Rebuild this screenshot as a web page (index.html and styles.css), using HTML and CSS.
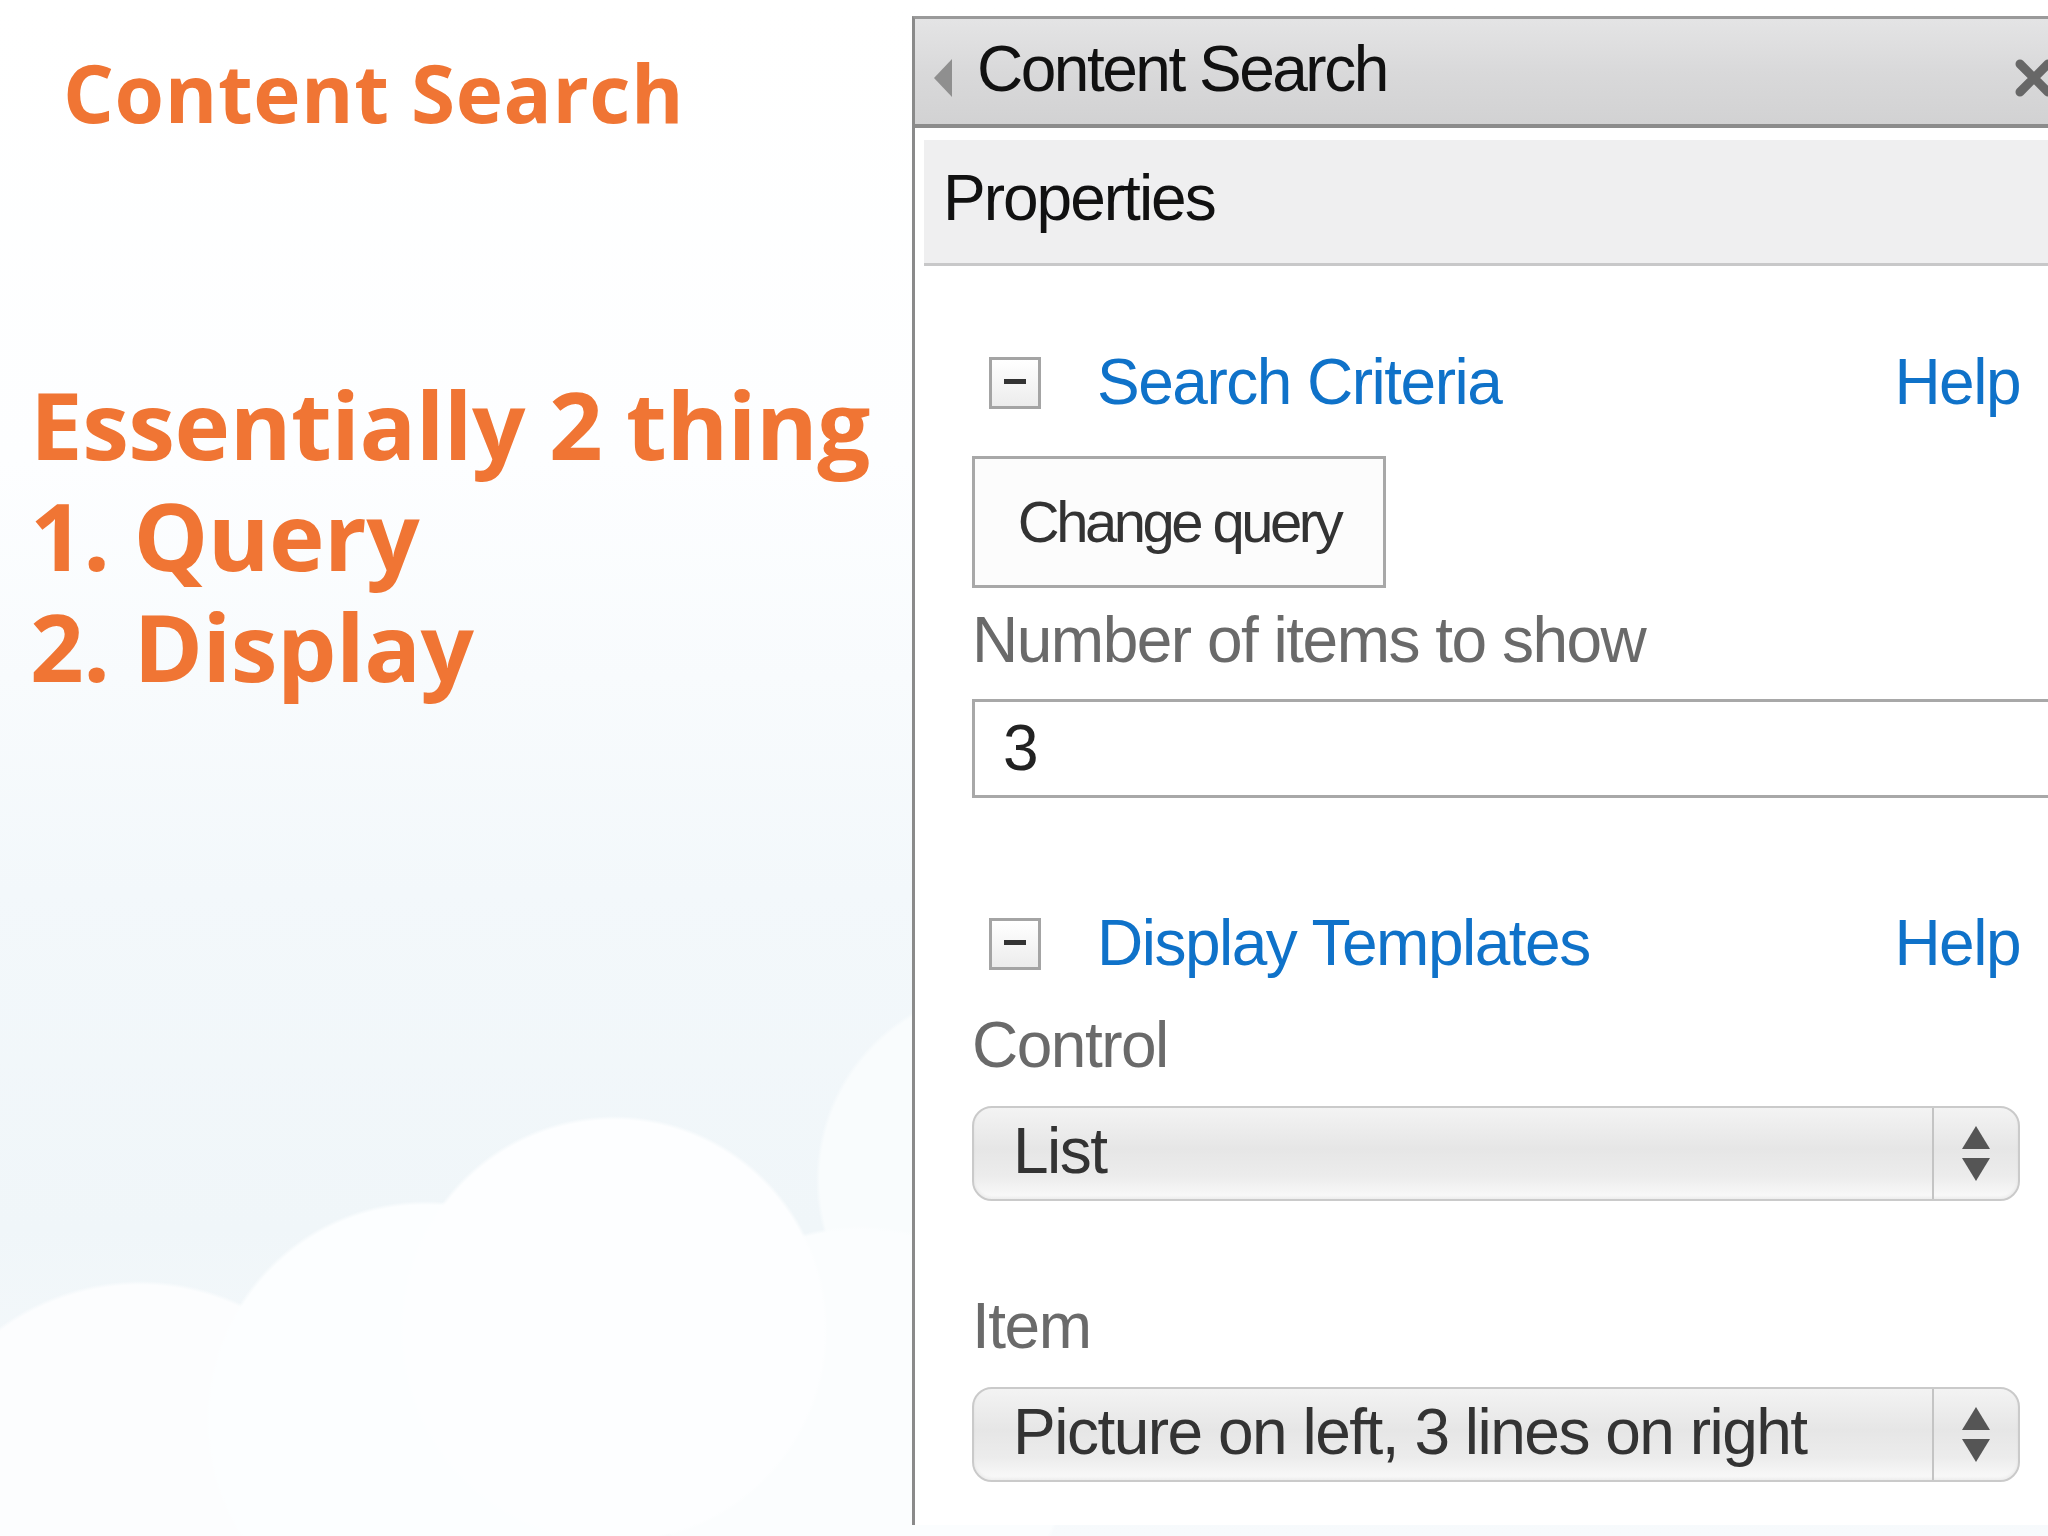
FILE: index.html
```html
<!doctype html>
<html>
<head>
  <link rel="stylesheet" href="styles.css">
</head>
<body>
  <div class="slide">
    <div class="intro">
      <h1 class="title">Content Search</h1>
      <div class="points">
        <p>Essentially 2 thing</p>
        <p>1. Query</p>
        <p>2. Display</p>
      </div>
    </div>

    <div class="panel">
      <div class="panel-head">
        <span class="back"></span>
        <span class="panel-title">Content Search</span>
        <svg class="close" width="44" height="44" viewBox="0 0 44 44">
          <path d="M8 8 L36 36 M36 8 L8 36" stroke="#676767" stroke-width="9" stroke-linecap="round"/>
        </svg>
      </div>
      <div class="props">Properties</div>

      <div class="panel-body">
        <div class="section-head">
          <span class="toggle"></span>
          <span class="section-title">Search Criteria</span>
          <span class="help">Help</span>
        </div>
        <button class="btn">Change query</button>
        <div class="field-label first">Number of items to show</div>
        <div class="text-input">3</div>

        <div class="section-head second">
          <span class="toggle"></span>
          <span class="section-title">Display Templates</span>
          <span class="help">Help</span>
        </div>
        <div class="field-label">Control</div>
        <div class="select">
          <span class="select-value">List</span>
          <span class="arrows"><span class="up"></span><span class="down"></span></span>
        </div>
        <div class="field-label far">Item</div>
        <div class="select">
          <span class="select-value">Picture on left, 3 lines on right</span>
          <span class="arrows"><span class="up"></span><span class="down"></span></span>
        </div>
      </div>
    </div>
  </div>
</body>
</html>
```

FILE: styles.css
```css
body{
  margin: 0;
  overflow: hidden;
}
.slide{
  width: 2048px;
  height: 1536px;
  display: flex;
  align-items: flex-start;
  overflow: hidden;
  background:
    radial-gradient(circle at 614px 1330px, #fdfeff 210px, rgba(253,254,255,0) 214px),
    radial-gradient(circle at 425px 1420px, #fcfeff 215px, rgba(252,254,255,0) 219px),
    radial-gradient(circle at 140px 1520px, #fcfdfe 235px, rgba(252,253,254,0) 239px),
    radial-gradient(circle at 860px 1440px, #fbfdfe 210px, rgba(251,253,254,0) 214px),
    radial-gradient(circle at 1010px 1180px, #f9fcfd 190px, rgba(249,252,253,0) 194px),
    linear-gradient(180deg, #ffffff 0%, #fdfeff 30%, #f3f8fb 58%, #f0f6f9 80%, #f7fafc 100%);
}

/* left side */
.intro{
  width: 912px;
  flex-shrink: 0;
  font-family: "Open Sans", sans-serif;
  font-weight: 700;
  color: #f07534;
}
.title{
  margin: 37px 0 0 63px;
  font-size: 80px;
  font-weight: 700;
  line-height: 110px;
  letter-spacing: 0.6px;
}
.points{
  margin: 222px 0 0 30px;
  font-size: 94px;
  line-height: 111px;
  letter-spacing: -0.5px;
}
.points p{
  margin: 0;
}

/* web part panel */
.panel{
  flex: 1;
  margin-top: 16px;
  height: 1506px;
  background: #fff;
  border-left: 3px solid #8a8a8a;
  border-top: 3px solid #9a9a9a;
  overflow: hidden;
  font-family: "Liberation Sans", Arial, sans-serif;
  font-size: 64px;
  letter-spacing: -1.5px;
}
.panel-head{
  height: 105px;
  display: flex;
  align-items: center;
  background: linear-gradient(180deg, #e4e4e5 0%, #d9d9da 50%, #d2d2d3 100%);
  border-bottom: 4px solid #8c8c8c;
  padding-left: 19px;
}
.back{
  width: 0;
  height: 0;
  border-top: 19px solid transparent;
  border-bottom: 19px solid transparent;
  border-right: 18px solid #8f8f8f;
  margin-top: 12px;
  margin-right: 25px;
}
.panel-title{
  color: #111;
  letter-spacing: -2.5px;
  margin-top: -6px;
}
.close{
  margin-left: auto;
  margin-right: -8px;
  margin-top: 12px;
}
.props{
  margin: 12px 0 0 9px;
  height: 123px;
  line-height: 116px;
  padding-left: 19px;
  background: #efeff0;
  border-bottom: 3px solid #c8c8c9;
  color: #111;
  letter-spacing: -2px;
}
.panel-body{
  padding: 91px 28px 0 57px;
}
.section-head{
  display: flex;
  align-items: center;
  height: 52px;
}
.section-head.second{
  margin-top: 120px;
}
.toggle{
  width: 46px;
  height: 46px;
  margin-left: 17px;
  margin-right: 56px;
  border: 3px solid #a4a4a4;
  background: linear-gradient(180deg, #ffffff, #ececec);
  display: flex;
  align-items: center;
  justify-content: center;
}
.toggle::after{
  content: "";
  width: 22px;
  height: 5px;
  margin-top: -4px;
  background: #333;
}
.section-title{
  color: #0f72c9;
  margin-top: -2px;
}
.help{
  color: #0f72c9;
  margin-left: auto;
  margin-top: -2px;
}
.btn{
  display: block;
  margin-top: 47px;
  width: 414px;
  height: 132px;
  padding: 0 0 2px 0;
  border: 3px solid #a8a8a8;
  background: #fcfcfc;
  color: #333;
  font-family: "Liberation Sans", Arial, sans-serif;
  font-size: 58px;
  letter-spacing: -3.5px;
}
.field-label{
  color: #6a6a6a;
  line-height: 66px;
  margin-top: 42px;
}
.field-label.first{
  margin-top: 19px;
}
.field-label.far{
  margin-top: 92px;
}
.text-input{
  margin-top: 26px;
  height: 93px;
  width: 1200px;
  border: 3px solid #a8a8a8;
  padding-left: 28px;
  line-height: 92px;
  color: #222;
  box-sizing: content-box;
}
.select{
  margin-top: 28px;
  height: 91px;
  display: flex;
  align-items: stretch;
  border: 2px solid #cacaca;
  border-radius: 20px;
  background: linear-gradient(180deg, #f3f3f3 0%, #e6e6e6 45%, #ececec 75%, #fafafa 100%);
  box-shadow: inset 0 -2px 3px rgba(0,0,0,0.05);
}
.select-value{
  flex: 1;
  padding-left: 39px;
  line-height: 86px;
  color: #333;
}
.arrows{
  width: 84px;
  border-left: 2px solid #c4c4c4;
  display: flex;
  flex-direction: column;
  align-items: center;
  justify-content: center;
  gap: 9px;
}
.up, .down{
  width: 0;
  height: 0;
  border-left: 14px solid transparent;
  border-right: 14px solid transparent;
}
.up{
  border-bottom: 23px solid #555;
}
.down{
  border-top: 23px solid #555;
}
```
